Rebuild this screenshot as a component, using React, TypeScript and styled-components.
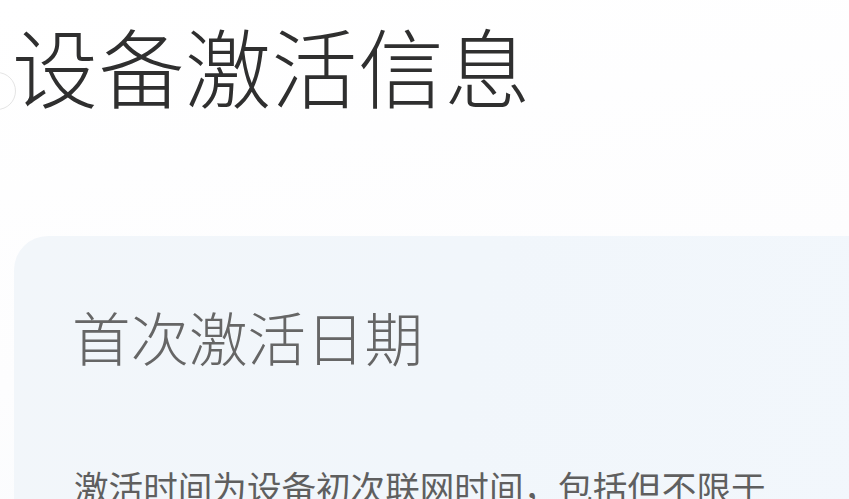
import styled, { createGlobalStyle } from "styled-components";

const GlobalStyle = createGlobalStyle`
  html, body {
    margin: 0;
    padding: 0;
    background: #ffffff;
  }
  body {
    font-family: "Noto Sans CJK SC", "Noto Sans", sans-serif;
    overflow: hidden;
  }
`;

const Page = styled.div`
  width: 849px;
  height: 499px;
  overflow: hidden;
  position: relative;
  background: linear-gradient(170deg, #ffffff 0%, #fdfdfe 60%, #f9fbfd 100%);
`;

const Header = styled.div`
  display: flex;
  align-items: center;
  height: 140px;
  padding-left: 12px;
`;

const BackRing = styled.span`
  position: absolute;
  left: -22px;
  top: 72px;
  width: 36px;
  height: 36px;
  border-radius: 50%;
  border: 1px solid #e4e4e4;
`;

const Title = styled.h1`
  margin: 0;
  font-size: 86px;
  font-weight: 300;
  color: #2f2f2f;
  line-height: 1;
  letter-spacing: 0.5px;
  transform: translateY(-5px);
`;

const Card = styled.section`
  margin: 96px 0 0 14px;
  width: 880px;
  height: 320px;
  border-radius: 34px;
  background: linear-gradient(100deg, #f2f6fa 0%, #f1f6fb 50%, #f2f7fc 100%);
  padding: 71px 0 0 58px;
  box-sizing: border-box;
`;

const CardTitle = styled.h2`
  margin: 0;
  font-size: 58.5px;
  font-weight: 300;
  color: #666666;
  line-height: 1;
`;

const CardText = styled.p`
  margin: 103px 0 0;
  padding-left: 2px;
  font-size: 34.6px;
  font-weight: 400;
  color: #5f5f5f;
  line-height: 1;
  white-space: nowrap;
`;

export default function App() {
  return (
    <Page>
      <GlobalStyle />
      <BackRing />
      <Header>
        <Title>设备激活信息</Title>
      </Header>
      <Card>
        <CardTitle>首次激活日期</CardTitle>
        <CardText>激活时间为设备初次联网时间，包括但不限于</CardText>
      </Card>
    </Page>
  );
}
